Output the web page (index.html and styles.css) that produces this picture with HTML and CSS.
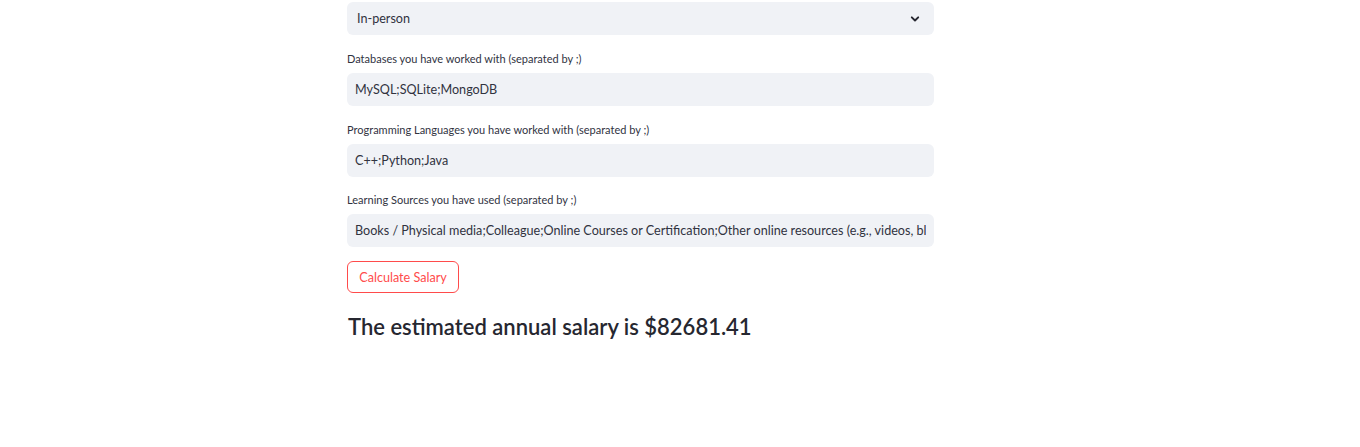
FILE: index.html
```html
<!DOCTYPE html>
<html lang="en">
<head>
<meta charset="utf-8">
<title>Salary Prediction</title>
<link rel="stylesheet" href="styles.css">
</head>
<body>
<main class="page">
  <div class="block">
    <div class="select">
      <span class="select-value">In-person</span>
      <svg class="chevron" width="12" height="12" viewBox="0 0 12 12" aria-hidden="true"><path d="M2.8 4.3 L6 7.5 L9.2 4.3" fill="none" stroke="#262730" stroke-width="1.9" stroke-linecap="round" stroke-linejoin="round"/></svg>
    </div>
  </div>
  <div class="field">
    <label class="label">Databases you have worked with (separated by ;)</label>
    <div class="input"><span class="value">MySQL;SQLite;MongoDB</span></div>
  </div>
  <div class="field">
    <label class="label">Programming Languages you have worked with (separated by ;)</label>
    <div class="input"><span class="value">C++;Python;Java</span></div>
  </div>
  <div class="field tight">
    <label class="label">Learning Sources you have used (separated by ;)</label>
    <div class="input"><span class="value">Books / Physical media;Colleague;Online Courses or Certification;Other online resources (e.g., videos, blogs, forum)</span></div>
  </div>
  <div class="actions">
    <button class="btn">Calculate Salary</button>
  </div>
  <h3 class="result">The estimated annual salary is $82681.41</h3>
</main>
</body>
</html>
```
FILE: styles.css
```css
html, body {
  margin: 0;
  padding: 0;
  background: #ffffff;
}
body {
  font-family: "Lato", "Noto Sans", sans-serif;
  color: #31333f;
}
.page {
  width: 587px;
  margin-left: 347px;
  padding-top: 2px;
  display: flex;
  flex-direction: column;
}
.select {
  height: 33px;
  background: #f0f2f6;
  border-radius: 6px;
  display: flex;
  align-items: center;
  justify-content: space-between;
  padding: 0 13px 0 10px;
  box-sizing: border-box;
  font-size: 12.6px;
  color: #31333f;
}
.chevron {
  display: block;
}
.field {
  margin-top: 17px;
  display: flex;
  flex-direction: column;
}
.field.tight {
  margin-top: 16px;
}
.label {
  font-size: 11px;
  line-height: 14px;
  height: 14px;
  margin-bottom: 7px;
  color: #31333f;
}
.input {
  height: 33px;
  background: #f0f2f6;
  border-radius: 6px;
  padding: 0 8px;
  box-sizing: border-box;
  display: flex;
  align-items: center;
  font-size: 12.6px;
  color: #31333f;
}
.value {
  flex: 1;
  min-width: 0;
  white-space: nowrap;
  overflow: hidden;
}
.actions {
  margin-top: 14px;
}
.btn {
  font-family: inherit;
  font-size: 12.6px;
  color: #ff4b4b;
  background: #ffffff;
  border: 1px solid #ff4b4b;
  border-radius: 6px;
  height: 32px;
  width: 112px;
  padding: 0;
}
.result {
  margin: 20px 0 0 1px;
  font-size: 22px;
  line-height: 28px;
  font-weight: 600;
  color: #262730;
}
```
